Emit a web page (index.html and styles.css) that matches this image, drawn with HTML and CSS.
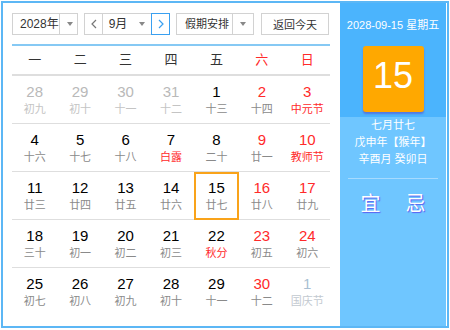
FILE: index.html
```html
<!DOCTYPE html>
<html lang="zh-CN">
<head>
  <meta charset="UTF-8">
  <title>万年历</title>
  <link rel="stylesheet" href="styles.css">
</head>
<body>
  <div class="calendar">
    <div class="main">
      <div class="toolbar">
        <div class="select year-select">
          <span class="select-text">2028年</span>
          <span class="select-arrow"><i class="caret"></i></span>
        </div>
        <div class="month-group">
          <span class="nav-btn">
            <svg width="8" height="10" viewBox="0 0 8 10"><polyline points="6,1 2,5 6,9" fill="none" stroke="#777" stroke-width="1.2"/></svg>
          </span>
          <div class="select month-select">
            <span class="select-text">9月</span>
            <span class="select-arrow"><i class="caret"></i></span>
          </div>
          <span class="nav-btn nav-next">
            <svg width="8" height="10" viewBox="0 0 8 10"><polyline points="2,1 6,5 2,9" fill="none" stroke="#3aa0f0" stroke-width="1.2"/></svg>
          </span>
        </div>
        <div class="select holiday-select">
          <span class="select-text">假期安排</span>
          <span class="select-arrow"><i class="caret"></i></span>
        </div>
        <button class="today-btn">返回今天</button>
      </div>

      <div class="weekdays">
        <span>一</span><span>二</span><span>三</span><span>四</span><span>五</span>
        <span class="red">六</span><span class="red">日</span>
      </div>

      <div class="days">
        <div class="day other"><b>28</b><small>初九</small></div>
        <div class="day other"><b>29</b><small>初十</small></div>
        <div class="day other"><b>30</b><small>十一</small></div>
        <div class="day other"><b>31</b><small>十二</small></div>
        <div class="day"><b>1</b><small>十三</small></div>
        <div class="day weekend"><b>2</b><small>十四</small></div>
        <div class="day weekend"><b>3</b><small class="fest">中元节</small></div>

        <div class="day"><b>4</b><small>十六</small></div>
        <div class="day"><b>5</b><small>十七</small></div>
        <div class="day"><b>6</b><small>十八</small></div>
        <div class="day"><b>7</b><small class="fest">白露</small></div>
        <div class="day"><b>8</b><small>二十</small></div>
        <div class="day weekend"><b>9</b><small>廿一</small></div>
        <div class="day weekend"><b>10</b><small class="fest">教师节</small></div>

        <div class="day"><b>11</b><small>廿三</small></div>
        <div class="day"><b>12</b><small>廿四</small></div>
        <div class="day"><b>13</b><small>廿五</small></div>
        <div class="day"><b>14</b><small>廿六</small></div>
        <div class="day today"><b>15</b><small>廿七</small></div>
        <div class="day weekend"><b>16</b><small>廿八</small></div>
        <div class="day weekend"><b>17</b><small>廿九</small></div>

        <div class="day"><b>18</b><small>三十</small></div>
        <div class="day"><b>19</b><small>初一</small></div>
        <div class="day"><b>20</b><small>初二</small></div>
        <div class="day"><b>21</b><small>初三</small></div>
        <div class="day"><b>22</b><small class="fest">秋分</small></div>
        <div class="day weekend"><b>23</b><small>初五</small></div>
        <div class="day weekend"><b>24</b><small>初六</small></div>

        <div class="day"><b>25</b><small>初七</small></div>
        <div class="day"><b>26</b><small>初八</small></div>
        <div class="day"><b>27</b><small>初九</small></div>
        <div class="day"><b>28</b><small>初十</small></div>
        <div class="day"><b>29</b><small>十一</small></div>
        <div class="day weekend"><b>30</b><small>十二</small></div>
        <div class="day next"><b>1</b><small>国庆节</small></div>
      </div>
    </div>

    <div class="side">
      <div class="side-top">
        <div class="side-date">2028-09-15 星期五</div>
        <div class="big-day">15</div>
      </div>
      <div class="side-bottom">
        <div class="lunar">
          <p>七月廿七</p>
          <p>戊申年【猴年】</p>
          <p>辛酉月 癸卯日</p>
        </div>
        <div class="yiji">
          <span>宜</span><span>忌</span>
        </div>
      </div>
    </div>
  </div>
</body>
</html>
```

FILE: styles.css
```css
:root {
  --blue: #4bb4fd;
  --blue-light: #6fc6ff;
  --red: #ff2a2a;
  --line: #dedede;
  --text: #333;
}

body {
  margin: 0;
  background: #fff;
  font-family: "Liberation Sans", "Noto Sans CJK SC", sans-serif;
  color: var(--text);
}

.calendar {
  display: flex;
  width: 444px;
  height: 323px;
  margin: 1px;
  border: 2px solid #5cb7f5;
  background: #fff;
}

.main {
  width: 318px;
  padding: 10px 10px 0 9px;
}

/* toolbar */
.toolbar {
  display: flex;
  height: 22px;
  padding-bottom: 9px;
  border-bottom: 2px solid #86c9f4;
}

.select {
  display: flex;
  height: 22px;
  box-sizing: border-box;
  border: 1px solid #d2d2d2;
  font-size: 12px;
  line-height: 20px;
  white-space: nowrap;
  background: #fff;
}

.select-text {
  flex: 1;
  padding-left: 7px;
}

.select-arrow {
  display: flex;
  align-items: center;
  justify-content: center;
  width: 20px;
  flex-shrink: 0;
  border-left: 1px solid #d2d2d2;
}

.caret {
  width: 0;
  height: 0;
  border-left: 3px solid transparent;
  border-right: 3px solid transparent;
  border-top: 4px solid #888;
}

.year-select {
  width: 66px;
}

.month-group {
  display: flex;
  margin-left: 6px;
}

.nav-btn {
  display: flex;
  align-items: center;
  justify-content: center;
  width: 19px;
  height: 22px;
  box-sizing: border-box;
  border: 1px solid #d2d2d2;
}

.nav-next {
  border-color: #3aa0f0;
  margin-left: -1px;
}

.month-select {
  width: 50px;
  margin-left: -1px;
}

.month-select .select-text {
  text-align: center;
  padding-left: 0;
}

.month-select .select-arrow {
  border-left: none;
  width: 18px;
}

.holiday-select {
  width: 78px;
  margin-left: 6px;
}

.holiday-select .select-text {
  padding-left: 8px;
  font-size: 11px;
}

.today-btn {
  width: 68px;
  height: 22px;
  margin-left: 7px;
  padding: 0;
  border: 1px solid #d2d2d2;
  background: #fff;
  font-family: inherit;
  font-size: 11px;
  color: var(--text);
  white-space: nowrap;
}

/* grid */
.weekdays {
  display: grid;
  grid-template-columns: repeat(7, 1fr);
  height: 28px;
  line-height: 28px;
  text-align: center;
  font-size: 13px;
  border-bottom: 2px solid var(--line);
}

.red {
  color: var(--red);
}

.days {
  display: grid;
  grid-template-columns: repeat(7, 1fr);
  grid-auto-rows: 48px;
}

.day {
  display: flex;
  flex-direction: column;
  align-items: center;
  box-sizing: border-box;
  padding-top: 7px;
  border-bottom: 1px solid var(--line);
}

.day:nth-last-child(-n+7) {
  border-bottom: none;
}

.day b {
  font-weight: normal;
  font-size: 15px;
  line-height: 18px;
  color: #000;
}

.day small {
  font-size: 11px;
  line-height: 17px;
  color: #8a8a8a;
}

.day.weekend b {
  color: var(--red);
}

.day small.fest {
  color: var(--red);
}

.day.other b {
  color: #b9b9b9;
}

.day.other small {
  color: #c4c4c4;
}

.day.next b {
  color: #a9bfd3;
}

.day.next small {
  color: #c2c9d0;
}

.day.today {
  border: 2px solid #f9a31a;
  padding-top: 5px;
}

/* side panel */
.side {
  width: 106px;
  display: flex;
  flex-direction: column;
  color: #fff;
}

.side-top {
  height: 114px;
  background: var(--blue);
  display: flex;
  flex-direction: column;
  align-items: center;
}

.side-date {
  margin-top: 14px;
  font-size: 11px;
  line-height: 16px;
  white-space: nowrap;
}

.big-day {
  width: 61px;
  height: 66px;
  margin-top: 13px;
  box-sizing: border-box;
  padding-bottom: 7px;
  border-radius: 3px;
  background: #ffa800;
  box-shadow: 0 2px 2px rgba(90, 70, 200, 0.55);
  display: flex;
  align-items: center;
  justify-content: center;
  font-size: 36px;
}

.side-bottom {
  flex: 1;
  background: var(--blue-light);
}

.lunar {
  margin: 0 8px;
  padding-bottom: 10px;
  border-bottom: 1px solid #a6dbff;
  text-align: center;
  font-size: 11px;
}

.lunar p {
  margin: 0;
  line-height: 17px;
  white-space: nowrap;
}

.yiji {
  display: flex;
  justify-content: center;
  gap: 25px;
  margin-top: 12px;
  font-size: 20px;
  line-height: 26px;
  text-shadow: 1px 1px 1px #5a5cf0;
}
```
